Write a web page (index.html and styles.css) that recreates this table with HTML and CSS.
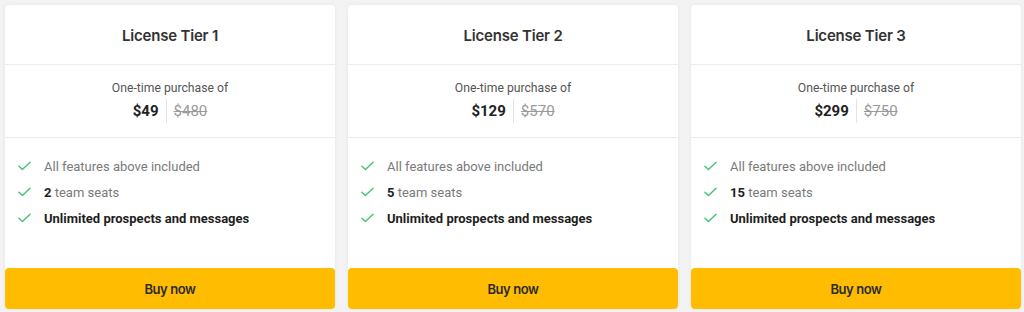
FILE: index.html
```html
<!DOCTYPE html>
<html lang="en">
<head>
<meta charset="utf-8">
<link rel="stylesheet" href="styles.css">
</head>
<body>
<div class="tiers">
  <div class="card">
    <div class="head">License Tier 1</div>
    <div class="price">
      <div class="label">One-time purchase of</div>
      <div class="amounts"><span class="now">$49</span><span class="was">$480</span></div>
    </div>
    <ul class="features">
      <li><svg class="check" viewBox="0 0 14 10"><path d="M1 5.2 L4.8 8.8 L13 1"/></svg><span>All features above included</span></li>
      <li><svg class="check" viewBox="0 0 14 10"><path d="M1 5.2 L4.8 8.8 L13 1"/></svg><span><b>2</b> team seats</span></li>
      <li><svg class="check" viewBox="0 0 14 10"><path d="M1 5.2 L4.8 8.8 L13 1"/></svg><span class="strong">Unlimited prospects and messages</span></li>
    </ul>
    <button class="buy">Buy now</button>
  </div>
  <div class="card">
    <div class="head">License Tier 2</div>
    <div class="price">
      <div class="label">One-time purchase of</div>
      <div class="amounts"><span class="now">$129</span><span class="was">$570</span></div>
    </div>
    <ul class="features">
      <li><svg class="check" viewBox="0 0 14 10"><path d="M1 5.2 L4.8 8.8 L13 1"/></svg><span>All features above included</span></li>
      <li><svg class="check" viewBox="0 0 14 10"><path d="M1 5.2 L4.8 8.8 L13 1"/></svg><span><b>5</b> team seats</span></li>
      <li><svg class="check" viewBox="0 0 14 10"><path d="M1 5.2 L4.8 8.8 L13 1"/></svg><span class="strong">Unlimited prospects and messages</span></li>
    </ul>
    <button class="buy">Buy now</button>
  </div>
  <div class="card">
    <div class="head">License Tier 3</div>
    <div class="price">
      <div class="label">One-time purchase of</div>
      <div class="amounts"><span class="now">$299</span><span class="was">$750</span></div>
    </div>
    <ul class="features">
      <li><svg class="check" viewBox="0 0 14 10"><path d="M1 5.2 L4.8 8.8 L13 1"/></svg><span>All features above included</span></li>
      <li><svg class="check" viewBox="0 0 14 10"><path d="M1 5.2 L4.8 8.8 L13 1"/></svg><span><b>15</b> team seats</span></li>
      <li><svg class="check" viewBox="0 0 14 10"><path d="M1 5.2 L4.8 8.8 L13 1"/></svg><span class="strong">Unlimited prospects and messages</span></li>
    </ul>
    <button class="buy">Buy now</button>
  </div>
</div>
</body>
</html>
```

FILE: styles.css
```css
html, body {
  margin: 0;
  padding: 0;
  background: #f3f3f3;
}
body {
  font-family: Roboto, "Liberation Sans", sans-serif;
  width: 1024px;
  height: 312px;
  overflow: hidden;
}
.tiers {
  display: flex;
  gap: 13px;
  padding: 5px 3px 0 5px;
}
.card {
  width: 330px;
  height: 304px;
  background: #fff;
  border-radius: 4px;
  box-shadow: 0 0 4px rgba(0, 0, 0, 0.06);
  display: flex;
  flex-direction: column;
}
.head {
  height: 60px;
  display: flex;
  align-items: center;
  justify-content: center;
  padding-top: 2px;
  box-sizing: border-box;
  font-family: Inter, Roboto, sans-serif;
  font-weight: 600;
  font-size: 15px;
  letter-spacing: -0.2px;
  color: #333;
  border-bottom: 1px solid #ececec;
}
.price {
  height: 73px;
  box-sizing: border-box;
  padding-top: 13px;
  border-bottom: 1px solid #ececec;
  text-align: center;
}
.label {
  font-size: 12.2px;
  line-height: 21px;
  color: #555;
}
.amounts {
  display: flex;
  justify-content: center;
  align-items: stretch;
  height: 24px;
  line-height: 24px;
  font-size: 15px;
}
.now {
  font-weight: 700;
  color: #222;
  padding-right: 7px;
  border-right: 1px solid #e4e4e4;
}
.was {
  color: #9a9a9a;
  text-decoration: line-through;
  padding-left: 7px;
}
.features {
  list-style: none;
  margin: 0;
  padding: 19px 0 0 13px;
  flex: 1;
  display: flex;
  flex-direction: column;
  gap: 8px;
}
.features li {
  display: flex;
  align-items: center;
  height: 18px;
  font-size: 13px;
  color: #7a7a7a;
}
.features b, .features .strong {
  color: #1e1e1e;
  font-weight: 700;
}
.check {
  width: 13px;
  height: 10px;
  margin-right: 13px;
  fill: none;
  stroke: #4cc27a;
  stroke-width: 1.6;
  stroke-linecap: round;
  stroke-linejoin: round;
}
.buy {
  height: 41px;
  border: 0;
  border-radius: 4px;
  background: #ffbc00;
  font-family: Inter, Roboto, sans-serif;
  font-weight: 600;
  font-size: 13px;
  letter-spacing: -0.4px;
  color: #2b2b2b;
  padding: 0;
  margin: 0;
}
```
